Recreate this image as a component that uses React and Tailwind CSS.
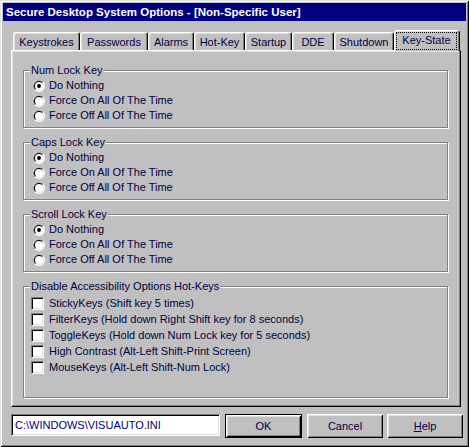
const tabs = [
  { label: 'Keystrokes', w: 'w-[67px]' },
  { label: 'Passwords', w: 'w-[68px]' },
  { label: 'Alarms', w: 'w-[46px]' },
  { label: 'Hot-Key', w: 'w-[51px]' },
  { label: 'Startup', w: 'w-[47px]' },
  { label: 'DDE', w: 'w-[42px]' },
  { label: 'Shutdown', w: 'w-[60px]' },
];

const radioOptions = ['Do Nothing', 'Force On All Of The Time', 'Force Off All Of The Time'];

const hotKeys = [
  'StickyKeys (Shift key 5 times)',
  'FilterKeys (Hold down Right Shift key for 8 seconds)',
  'ToggleKeys (Hold down Num Lock key for 5 seconds)',
  'High Contrast (Alt-Left Shift-Print Screen)',
  'MouseKeys (Alt-Left Shift-Num Lock)',
];

function Radio({ checked }) {
  return (
    <svg width="12" height="12" viewBox="0 0 12 12" className="shrink-0">
      <circle cx="6" cy="6" r="6" fill="#fff" />
      <path d="M1.76 10.24 A6 6 0 0 1 10.24 1.76 Z" fill="#808080" />
      <circle cx="6" cy="6" r="5" fill="#dfdfdf" />
      <path d="M2.46 9.54 A5 5 0 0 1 9.54 2.46 Z" fill="#000" />
      <circle cx="6" cy="6" r="4" fill="#fff" />
      {checked && <circle cx="6" cy="6" r="2" fill="#000" />}
    </svg>
  );
}

function Checkbox() {
  return (
    <div className="w-[13px] h-[13px] shrink-0 bg-white border border-t-[#808080] border-l-[#808080] border-r-white border-b-white shadow-[inset_1px_1px_0_#000,inset_-1px_-1px_0_#dfdfdf]" />
  );
}

function GroupBox({ title, className, children }) {
  return (
    <div
      className={`relative w-[425px] border border-[#808080] shadow-[1px_1px_0_#fff,inset_1px_1px_0_#fff] ${className}`}
    >
      <span className="absolute top-[-7px] left-[6px] px-[1px] bg-[#c0c0c0] leading-[13px]">
        {title}
      </span>
      {children}
    </div>
  );
}

function LockGroup({ title, className }) {
  return (
    <GroupBox title={title} className={`h-[58px] pt-[7px] pl-[9px] ${className}`}>
      {radioOptions.map((opt, i) => (
        <div key={opt} className="h-[15px] flex items-center gap-[4px]">
          <Radio checked={i === 0} />
          <span>{opt}</span>
        </div>
      ))}
    </GroupBox>
  );
}

function Button({ children, isDefault, className }) {
  return (
    <div
      className={`h-[24px] flex items-center justify-center bg-[#c0c0c0] ${
        isDefault
          ? 'border border-black shadow-[inset_1px_1px_0_#fff,inset_-1px_-1px_0_#000,inset_2px_2px_0_#dfdfdf,inset_-2px_-2px_0_#808080]'
          : 'shadow-[inset_1px_1px_0_#fff,inset_-1px_-1px_0_#000,inset_2px_2px_0_#dfdfdf,inset_-2px_-2px_0_#808080]'
      } ${className}`}
    >
      {children}
    </div>
  );
}

export default function App() {
  return (
    <div className="w-[469px] h-[447px] bg-[#c0c0c0] p-[3px] flex flex-col text-[11px] text-[#000040] font-['Liberation_Sans',Arial,sans-serif] shadow-[inset_1px_1px_0_#dfdfdf,inset_-1px_-1px_0_#000,inset_2px_2px_0_#fff,inset_-2px_-2px_0_#808080]">
      {/* title bar */}
      <div className="h-[18px] bg-[#000080] text-white font-bold text-[11.5px] leading-[18px] pl-[3px] whitespace-nowrap">
        Secure Desktop System Options - [Non-Specific User]
      </div>

      {/* tabs */}
      <div className="mt-[9px] h-[20px] flex items-end pl-[10px]">
        {tabs.map((t) => (
          <div
            key={t.label}
            className={`${t.w} h-[18px] flex items-center justify-center pt-[1px] rounded-t-[3px] border-t border-l border-r border-t-white border-l-white border-r-black shadow-[inset_-1px_0_0_#808080,inset_1px_1px_0_#dfdfdf]`}
          >
            {t.label}
          </div>
        ))}
        <div className="relative z-10 w-[66px] h-[21px] -mb-[1px] flex p-[1px] pr-[2px] bg-[#c0c0c0] rounded-t-[3px] border-t border-l border-r border-t-white border-l-white border-r-black shadow-[inset_-1px_0_0_#808080,inset_1px_1px_0_#dfdfdf]">
          <div className="flex-1 flex items-center justify-center border border-dotted border-black pb-[1px]">
            Key-State
          </div>
        </div>
      </div>

      {/* tab panel */}
      <div className="ml-[8px] w-[450px] h-[357px] pt-[19px] pl-[11px] border border-t-white border-l-white border-r-black border-b-black shadow-[inset_-1px_-1px_0_#808080,inset_1px_1px_0_#dfdfdf]">
        <LockGroup title="Num Lock Key" className="mb-[14px]" />
        <LockGroup title="Caps Lock Key" className="mb-[14px]" />
        <LockGroup title="Scroll Lock Key" className="mb-[14px]" />
        <GroupBox title="Disable Accessibility Options Hot-Keys" className="h-[112px] pt-[8px] pl-[7px]">
          {hotKeys.map((k) => (
            <div key={k} className="h-[16px] flex items-center gap-[5px]">
              <Checkbox />
              <span>{k}</span>
            </div>
          ))}
        </GroupBox>
      </div>

      {/* bottom row */}
      <div className="mt-[7px] pl-[8px] flex items-start">
        <div className="w-[209px] h-[22px] bg-white flex items-center pl-[3px] border border-t-[#808080] border-l-[#808080] border-r-white border-b-white shadow-[inset_1px_1px_0_#000,inset_-1px_-1px_0_#dfdfdf] text-[#000080]">
          C:\WINDOWS\VISUAUTO.INI
        </div>
        <Button isDefault className="ml-[5px] w-[77px]">
          OK
        </Button>
        <Button className="ml-[5px] w-[76px]">Cancel</Button>
        <Button className="ml-[4px] w-[76px]">
          <span>
            <span className="underline">H</span>elp
          </span>
        </Button>
      </div>
    </div>
  );
}
